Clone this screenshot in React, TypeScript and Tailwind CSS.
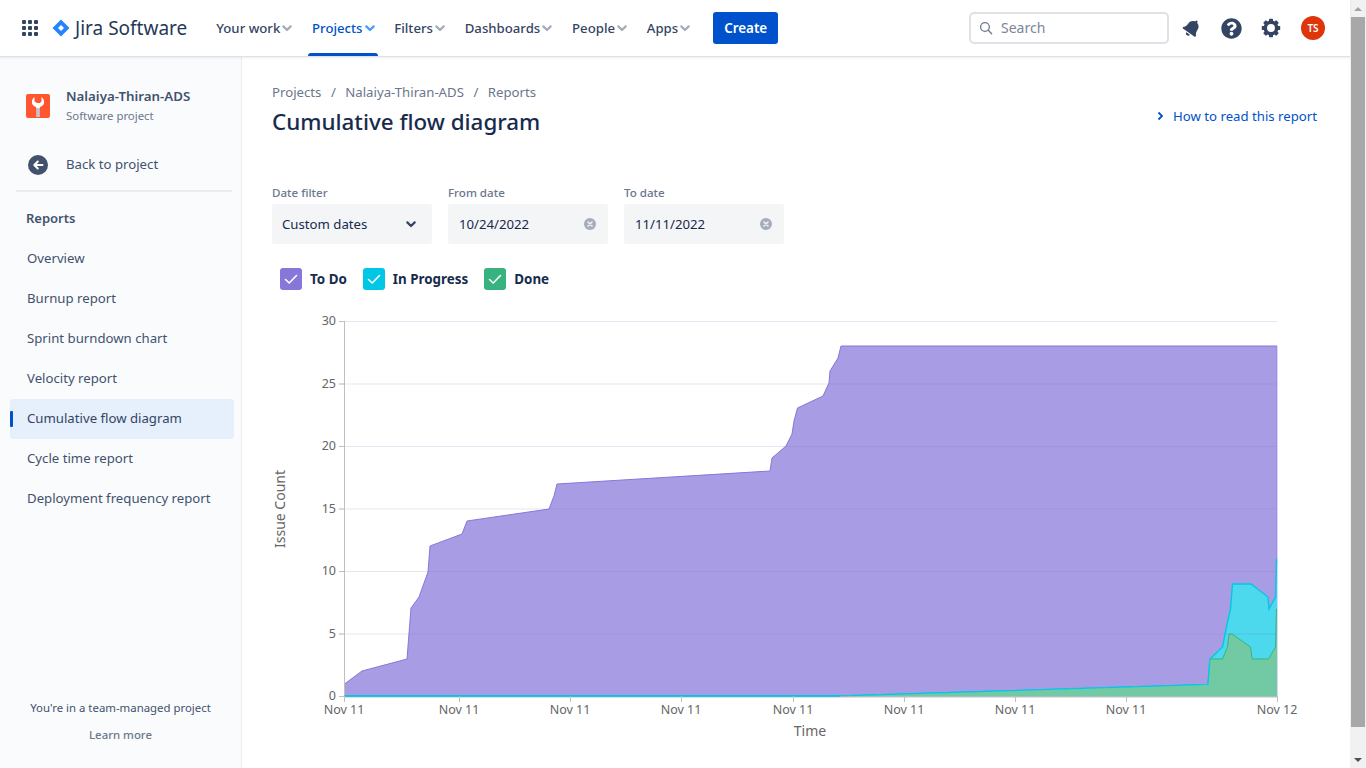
import { FaBell, FaQuestionCircle } from "react-icons/fa";

const font = { fontFamily: '"Noto Sans", "Open Sans", sans-serif' };

function Chevron({ className }: { className?: string }) {
  return (
    <svg viewBox="0 0 24 24" width="16" height="16" className={className} fill="none" stroke="currentColor" strokeWidth="3.400" strokeLinecap="round" strokeLinejoin="round">
      <path d="M6.500 9.500 12 15l5.500-5.500" />
    </svg>
  );
}

function NavItem({ label, active }: { label: string; active?: boolean }) {
  return (
    <div className={`relative flex h-14 items-center pl-1 text-[13.2px] font-medium ${active ? "text-[#0052CC]" : "text-[#344563]"}`}>
      <span className="pt-px">{label}</span>
      <Chevron className={`-ml-px ${active ? "text-[#4C9AFF]" : "text-[#A5ADBA]"}`} />
      {active && <div className="absolute inset-x-0 bottom-0 h-[3px] rounded-t bg-[#0052CC]" />}
    </div>
  );
}

function Check({ color, label }: { color: string; label: string }) {
  return (
    <div className="flex items-center gap-2">
      <div className={`flex h-[22px] w-[22px] items-center justify-center rounded-[3px] ${color}`}>
        <svg viewBox="0 0 16 16" width="16" height="16" fill="none" stroke="white" strokeWidth="1.600" strokeLinecap="round" strokeLinejoin="round">
          <path d="M2.500 8.500 6.200 12 13.500 4.500" />
        </svg>
      </div>
      <span className="text-[13.4px] font-bold text-[#172B4D]">{label}</span>
    </div>
  );
}

function ClearIcon() {
  return (
    <svg viewBox="0 0 12 12" width="12" height="12">
      <circle cx="6" cy="6" r="6" fill="#A5ADBA" />
      <path d="M4 4l4 4M8 4l-4 4" stroke="#F4F5F7" strokeWidth="1.500" strokeLinecap="round" />
    </svg>
  );
}

function GearIcon() {
  return (
    <svg viewBox="0 0 20 20" width="20" height="20" className="ml-[19px]">
      <circle cx="10" cy="10" r="5.700" fill="none" stroke="#344563" strokeWidth="3.500" />
      {[0, 45, 90, 135, 180, 225, 270, 315].map((a) => (
        <rect key={a} x="8" y="0.800" width="4" height="3.500" rx="0.600" fill="#344563" transform={`rotate(${a} 10 10)`} />
      ))}
    </svg>
  );
}

function DateField({ label, value }: { label: string; value: string }) {
  return (
    <div className="w-40">
      <div className="mb-[3px] h-[17px] text-[11.6px] font-medium leading-[17px] text-[#6B778C]">{label}</div>
      <div className="flex h-10 items-center justify-between rounded-[3px] bg-[#F4F5F7] pl-[11px] pr-3 text-[13.2px] text-[#172B4D]">
        <span className="pt-px">{value}</span>
        <ClearIcon />
      </div>
    </div>
  );
}

const sideItems = ["Overview", "Burnup report", "Sprint burndown chart", "Velocity report", "Cumulative flow diagram", "Cycle time report", "Deployment frequency report"];
const xLabels = [344, 459, 570, 681, 793, 904, 1015, 1126];
const X0 = 272;
const Y0 = 300;

function pts(list: number[][]) {
  return list.map(([x, y]) => `${x - X0},${y - Y0}`).join(" ");
}

const purple = [[344.5, 684], [362, 671], [407, 659], [411, 608], [419, 597], [428, 572], [430, 546], [462, 534], [467, 521], [549, 509], [554, 496], [557, 484], [770, 471], [772, 458], [786, 446], [792, 434], [794, 421], [797.5, 408], [823, 396], [829, 383], [830, 371], [838, 358], [841, 346], [1277, 346]];
const cyan = [[344.5, 696], [840, 696], [1208, 684.5], [1210, 659], [1222.5, 647], [1227.5, 622], [1230.5, 609], [1232.5, 584], [1251, 584], [1268, 597], [1269, 609], [1275.5, 597], [1276.5, 559], [1277, 559]];
const green = [[344.5, 696], [840, 696], [1208, 684.5], [1210, 659], [1222.5, 659], [1227.5, 647], [1229, 634], [1232, 634], [1250.5, 647], [1252, 659], [1268.5, 659], [1275.5, 647], [1276.5, 609], [1277, 609]];
const base = [[1277, 696.5], [344.5, 696.5]];

function Chart() {
  const H = 696;
  const ys = [0, 5, 10, 15, 20, 25, 30].map((v) => ({ v, y: 696 - v * 12.5 - Y0 + 0.5 }));
  return (
    <svg width="1060" height="452" className="mt-2.5 block overflow-visible" style={{ fontFamily: '"Noto Sans", sans-serif' }}>
      <polygon points={pts([...purple, ...base])} fill="#8777D9" fillOpacity="0.72" />
      <polyline points={pts(purple)} fill="none" stroke="#8777D9" strokeWidth="1" />
      <line x1={1277 - X0} x2={1277 - X0} y1={346 - Y0} y2={H - Y0} stroke="#8777D9" strokeWidth="0.600" />
      <polygon points={pts([...cyan, ...base])} fill="#FFFFFF" />
      <polygon points={pts([...cyan, ...base])} fill="#00C7E6" fillOpacity="0.7" />
      <polyline points={pts(cyan)} fill="none" stroke="#00C7E6" strokeWidth="1.400" />
      <polygon points={pts([...green, ...base])} fill="#FFFFFF" />
      <polygon points={pts([...green, ...base])} fill="#36B37E" fillOpacity="0.7" />
      <polyline points={pts(green.slice(3))} fill="none" stroke="#36B37E" strokeWidth="1" />
      <polyline points={pts(cyan.slice(0, 4))} fill="none" stroke="#00C7E6" strokeWidth="1.200" />
      {ys.map(({ v, y }) => (
        <g key={v}>
          <line x1={339 - X0} x2={1277 - X0} y1={y} y2={y} stroke="#7878BE" strokeOpacity="0.2" />
          <line x1={339 - X0} x2={344 - X0} y1={y} y2={y} stroke="#C0C0C0" />
          <text x={336 - X0} y={y + 3.5} textAnchor="end" fontSize="12.5" fill="#666666">{v}</text>
        </g>
      ))}
      <line x1={344.5 - X0} x2={344.5 - X0} y1={321 - Y0} y2={702 - Y0} stroke="#BFBFBF" />
      <line x1={344.5 - X0} x2={1277 - X0} y1={697 - Y0} y2={697 - Y0} stroke="#C0C0C0" />
      <line x1={344.5 - X0} x2={840 - X0} y1={696 - Y0} y2={696 - Y0} stroke="#00C7E6" strokeWidth="1.600" />
      {xLabels.map((x) => (
        <g key={x}>
          <line x1={x - X0 + 0.5} x2={x - X0 + 0.5} y1={H - Y0} y2={702 - Y0} stroke="#C0C0C0" />
          <text x={x - X0} y={714 - Y0} textAnchor="middle" fontSize="12.5" fill="#666666">Nov 11</text>
        </g>
      ))}
      <line x1={1277.5 - X0} x2={1277.5 - X0} y1={H - Y0} y2={702 - Y0} stroke="#C0C0C0" />
      <text x={1277 - X0} y={714 - Y0} textAnchor="middle" fontSize="12.5" fill="#666666">Nov 12</text>
      <text x={810 - X0} y={736 - Y0} textAnchor="middle" fontSize="14" fill="#666666">Time</text>
      <text transform={`translate(${285 - X0},${509 - Y0}) rotate(-90)`} textAnchor="middle" fontSize="14" fill="#666666">Issue Count</text>
    </svg>
  );
}

export default function App() {
  return (
    <div className="flex h-screen w-full overflow-hidden bg-white" style={font}>
      <div className="flex h-full w-[1350px] flex-col">
        <header className="relative z-10 flex h-[57px] shrink-0 items-center border-b border-[#DFE1E6] bg-white pl-[22px] pr-[25px] shadow-[0_1px_2px_rgba(9,30,66,0.08)]">
          <svg viewBox="0 0 16 16" width="16" height="16" className="shrink-0">
            {[0, 6, 12].flatMap((y) => [0, 6, 12].map((x) => <rect key={`${x}-${y}`} x={x} y={y} width="4" height="4" rx="1" fill="#344563" />))}
          </svg>
          <svg viewBox="0 0 18 18" width="18" height="18" className="ml-[14px] shrink-0">
            <path d="M9 0.500 17.500 9 9 17.500 0.500 9Z" fill="#2684FF" />
            <path d="M9 6 12 9 9 12 6 9Z" fill="white" />
          </svg>
          <span className="ml-[5px] text-[19px] leading-none text-[#253858]">Jira Software</span>
          <nav className="ml-[25px] flex items-center gap-[12.75px]">
            <NavItem label="Your work" />
            <NavItem label="Projects" active />
            <NavItem label="Filters" />
            <NavItem label="Dashboards" />
            <NavItem label="People" />
            <NavItem label="Apps" />
          </nav>
          <button className="ml-[20px] h-8 w-[65px] rounded-[3px] bg-[#0052CC] text-[13.4px] font-semibold text-white">Create</button>
          <div className="ml-auto flex h-8 w-[200px] items-center gap-[8px] rounded-[5px] border-2 border-[#DFE1E6] pl-2 text-sm text-[#7A869A]">
            <svg viewBox="0 0 16 16" width="14" height="14" fill="none" stroke="#6B778C" strokeWidth="1.500" strokeLinecap="round">
              <circle cx="6.800" cy="6.800" r="5" />
              <path d="M10.600 10.600 14.500 14.500" />
            </svg>
            <span>Search</span>
          </div>
          <FaBell className="ml-[14px] rotate-[35deg] text-[#344563]" size={18} />
          <FaQuestionCircle className="ml-[20px] text-[#344563]" size={21} />
          <GearIcon />
          <div className="ml-[20px] flex h-6 w-6 items-center justify-center rounded-full bg-[#DE350B] text-[10px] font-semibold text-white">TS</div>
        </header>
        <div className="flex min-h-0 flex-1">
          <aside className="flex w-[242px] shrink-0 flex-col border-r border-[#EBECF0] bg-[#FAFBFC] pl-[10px] pr-[7px]">
            <div className="flex items-center gap-4 pl-4 pt-[29px]">
              <div className="flex h-6 w-6 shrink-0 items-center justify-center rounded-[2px] bg-[#FF5630]">
                <svg viewBox="0 0 24 24" width="24" height="24">
                  <rect x="10.200" y="12" width="3.600" height="11" fill="#C1C7D0" />
                  <path d="M8.500 3C6.500 4.500 5.500 6.500 6 9c.4 2 2 3.500 4.200 4v1h3.600v-1c2.200-.5 3.800-2 4.200-4 .5-2.500-.5-4.500-2.500-6v4.500l-1.500 1.500h-3L8.500 7.500Z" fill="white" />
                </svg>
              </div>
              <div>
                <div className="text-[13.3px] font-semibold leading-5 text-[#42526E]">Nalaiya-Thiran-ADS</div>
                <div className="text-[11.4px] leading-5 text-[#6B778C]">Software project</div>
              </div>
            </div>
            <div className="flex items-center gap-[18px] pl-[18px] pt-[29px]">
              <svg viewBox="0 0 20 20" width="20" height="20">
                <circle cx="10" cy="10" r="10" fill="#42526E" />
                <path d="M14.500 10H6.500M9.800 6.500 6.300 10l3.500 3.500" fill="none" stroke="white" strokeWidth="2" strokeLinecap="round" strokeLinejoin="round" />
              </svg>
              <span className="text-[13.2px] text-[#42526E]">Back to project</span>
            </div>
            <div className="ml-[6px] mt-[15px] h-0.5 w-[216px] bg-[#EBECF0]" />
            <div className="pl-4 pt-4 text-[13px] font-semibold leading-5 text-[#42526E]">Reports</div>
            <div className="pt-[11px]">
              {sideItems.map((s) => {
                const active = s === "Cumulative flow diagram";
                return (
                  <div key={s} className={`relative flex h-10 items-center rounded-[3px] pl-[17px] text-[13.2px] ${active ? "bg-[#E6EFFC] text-[#344563]" : "text-[#42526E]"}`}>
                    {active && <div className="absolute left-0 top-3 h-4 w-[3px] rounded-[1px] bg-[#0052CC]" />}
                    {s}
                  </div>
                );
              })}
            </div>
            <div className="mt-auto pb-[23px] pr-[3px] text-center">
              <div className="text-[11.4px] leading-5 text-[#42526E]">You're in a team-managed project</div>
              <div className="mt-[7px] text-[11.4px] font-medium leading-5 text-[#6B778C]">Learn more</div>
            </div>
          </aside>
          <main className="min-w-0 flex-1 pl-[30px] pt-[25px]">
            <div className="flex gap-[9.5px] text-[13.2px] leading-5 text-[#6B778C]">
              <span>Projects</span><span>/</span><span>Nalaiya-Thiran-ADS</span><span>/</span><span>Reports</span>
            </div>
            <div className="flex items-start justify-between pr-[33px]">
              <h1 className="pt-[6px] text-[22.4px] font-medium leading-7 text-[#172B4D]">Cumulative flow diagram</h1>
              <div className="flex items-center gap-[8px] pt-1 text-[13.2px] leading-5 text-[#0052CC]">
                <svg viewBox="0 0 10 10" width="10" height="10" fill="none" stroke="#0052CC" strokeWidth="1.800"><path d="M3.500 1.500 7 5 3.500 8.500" /></svg>
                How to read this report
              </div>
            </div>
            <div className="flex gap-4 pt-[48px]">
              <div className="w-40">
                <div className="mb-[3px] h-[17px] text-[11.6px] font-medium leading-[17px] text-[#6B778C]">Date filter</div>
                <div className="flex h-10 items-center justify-between rounded-[3px] bg-[#F4F5F7] pl-[10px] pr-[13px] text-[13.2px] text-[#172B4D]">
                  <span className="pt-px">Custom dates</span>
                  <Chevron className="text-[#344563]" />
                </div>
              </div>
              <DateField label="From date" value="10/24/2022" />
              <DateField label="To date" value="11/11/2022" />
            </div>
            <div className="flex gap-4 pl-2 pt-6">
              <Check color="bg-[#8777D9]" label="To Do" />
              <Check color="bg-[#00C7E6]" label="In Progress" />
              <Check color="bg-[#36B37E]" label="Done" />
            </div>
            <Chart />
          </main>
        </div>
      </div>
      <div className="flex h-full w-4 shrink-0 flex-col bg-[#F1F1F1]">
        <div className="flex h-[17px] items-center justify-center">
          <div className="h-0 w-0 border-x-4 border-b-4 border-x-transparent border-b-[#A3A3A3]" />
        </div>
        <div className="mx-px h-[710px] bg-[#A8A8A8]" />
        <div className="mt-auto flex h-[17px] items-center justify-center">
          <div className="h-0 w-0 border-x-4 border-t-4 border-x-transparent border-t-[#505050]" />
        </div>
      </div>
    </div>
  );
}
